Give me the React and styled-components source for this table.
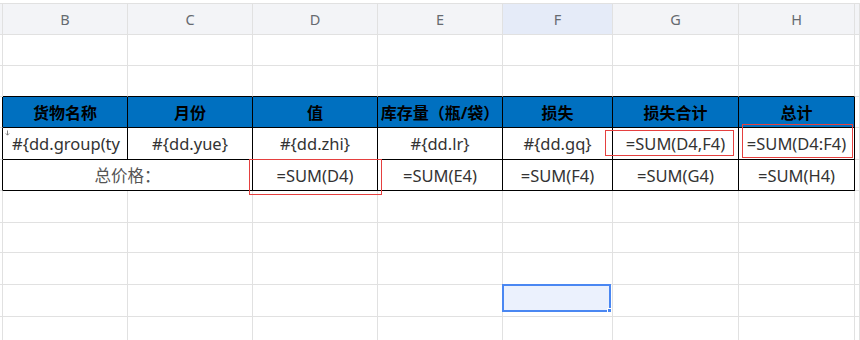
import React from "react";
import styled, { createGlobalStyle } from "styled-components";

const GlobalStyle = createGlobalStyle`
  html, body {
    margin: 0;
    padding: 0;
    background: #ffffff;
  }
  body {
    font-family: "Noto Sans", "Noto Sans CJK SC", sans-serif;
  }
`;

const GRID = "#e1e1e1";
const INK = "#000000";

const Wrap = styled.div`
  position: relative;
  width: 860px;
  height: 340px;
  overflow: hidden;
  padding-top: 3px;
  box-sizing: border-box;
`;

const Sheet = styled.div`
  display: grid;
  grid-template-columns: 3px 125px 125px 125px 125px 110px 126px 116px 1fr;
  grid-template-rows: 32px 31px 31px 31px 32px 31px 32px 30px 32px 32px 31px;
`;

const Cell = styled.div`
  position: relative;
  box-sizing: border-box;
  display: flex;
  align-items: center;
  justify-content: ${(p) => (p.$align === "left" ? "flex-start" : "center")};
  padding: ${(p) => (p.$align === "left" ? "0 0 0 9px" : "0")};
  grid-column: ${(p) => (p.$span ? `span ${p.$span}` : "auto")};
  background: ${(p) => p.$bg || "#ffffff"};
  border-right: 1px solid ${(p) => p.$br || GRID};
  border-bottom: 1px solid ${(p) => p.$bb || GRID};
  color: ${(p) => p.$color || "#333333"};
  font-size: ${(p) => (p.$bold ? "16px" : "16.5px")};
  font-weight: ${(p) => (p.$bold ? 700 : 400)};
  white-space: nowrap;
`;

const ColHead = styled(Cell)`
  border-top: 1px solid ${GRID};
  background: ${(p) => (p.$active ? "#e5ebf8" : "#f3f4f7")};
  color: #666a70;
  font-size: 14.5px;
`;

const DropMark = styled.svg`
  position: absolute;
  left: 2px;
  top: 2px;
`;

const Selection = styled.div`
  position: absolute;
  left: -1px;
  top: -1px;
  width: 109px;
  height: 28px;
  box-sizing: border-box;
  border: 2px solid #4a87f2;
  background: #ebf1fd;

  &::after {
    content: "";
    position: absolute;
    right: -3px;
    bottom: -3px;
    width: 3px;
    height: 3px;
    background: #4a87f2;
    border: 1px solid #ffffff;
  }
`;

const Mark = styled.div`
  position: absolute;
  box-sizing: border-box;
  border: 1px solid #e5403f;
  pointer-events: none;
`;

const columns = ["B", "C", "D", "E", "F", "G", "H", ""];
const titles = ["货物名称", "月份", "值", "库存量（瓶/袋）", "损失", "损失合计", "总计"];
const fields = ["#{dd.yue}", "#{dd.zhi}", "#{dd.lr}", "#{dd.gq}", "=SUM(D4,F4)", "=SUM(D4:F4)"];
const totals = ["=SUM(D4)", "=SUM(E4)", "=SUM(F4)", "=SUM(G4)", "=SUM(H4)"];

function BlankRow({ inkBottom, selectCol }) {
  return (
    <>
      <Cell />
      {columns.map((c, i) => (
        <Cell key={i} $bb={inkBottom && c ? INK : undefined}>
          {selectCol === c && <Selection />}
        </Cell>
      ))}
    </>
  );
}

export default function App() {
  return (
    <Wrap>
      <GlobalStyle />
      <Sheet>
        <ColHead />
        {columns.map((c, i) => (
          <ColHead key={i} $active={c === "F"}>
            {c}
          </ColHead>
        ))}

        <BlankRow />
        <BlankRow inkBottom />

        {/* 表头 */}
        <Cell $br={INK} />
        {titles.map((t) => (
          <Cell key={t} $bg="#0070c0" $br={INK} $bb={INK} $bold $color="#000000">
            {t}
          </Cell>
        ))}
        <Cell />

        {/* 明细行，首列内容在单元格边界处截断 */}
        <Cell $br={INK} />
        <Cell $br={INK} $bb={INK} $align="left">
          <DropMark width="5" height="6" viewBox="0 0 5 6">
            <path d="M2.5 0.5V5M0.8 3.4L2.5 5.2L4.2 3.4" stroke="#777" strokeWidth="0.9" fill="none" />
          </DropMark>
          #{"{"}dd.group(ty
        </Cell>
        {fields.map((f) => (
          <Cell key={f} $br={INK} $bb={INK}>
            {f}
          </Cell>
        ))}
        <Cell />

        {/* 合计行 */}
        <Cell $br={INK} />
        <Cell $span={2} $br={INK} $bb={INK} $color="#555555">
          总价格：
        </Cell>
        {totals.map((f) => (
          <Cell key={f} $br={INK} $bb={INK}>
            {f}
          </Cell>
        ))}
        <Cell />

        <BlankRow />
        <BlankRow />
        <BlankRow />
        <BlankRow selectCol="F" />
        <BlankRow />
      </Sheet>

      <Mark style={{ left: 249, top: 159, width: 133, height: 36 }} />
      <Mark style={{ left: 605, top: 130, width: 129, height: 26 }} />
      <Mark style={{ left: 742, top: 124, width: 111, height: 34 }} />
    </Wrap>
  );
}
